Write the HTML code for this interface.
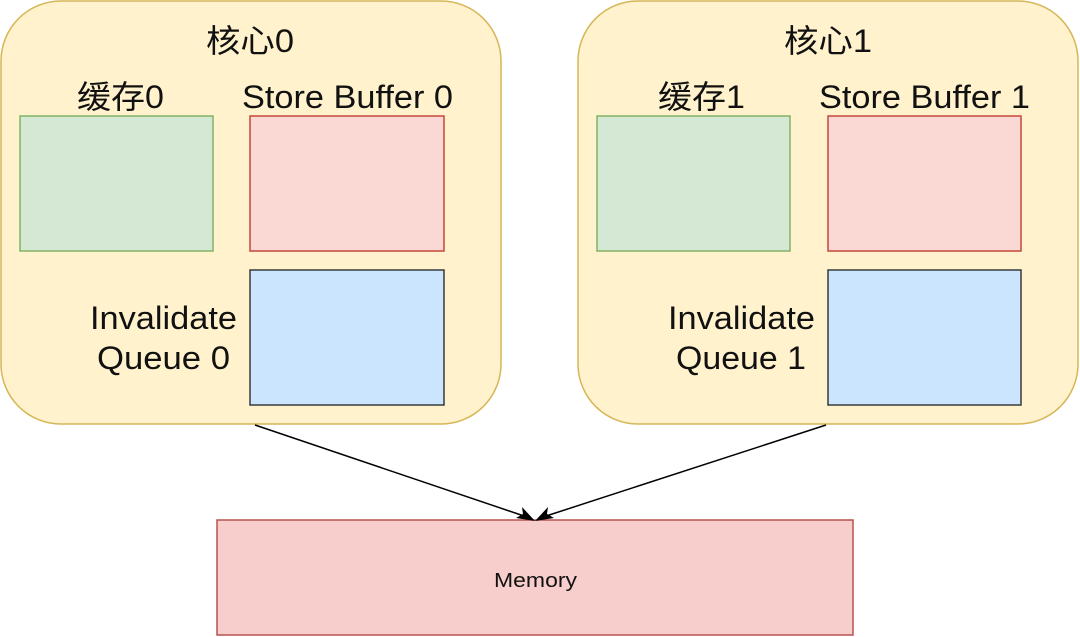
<!DOCTYPE html>
<html><head><meta charset="utf-8"><style>
html,body{margin:0;padding:0;background:#fff;}
svg{display:block}
text{font-family:"Liberation Sans","Noto Sans CJK SC",sans-serif;fill:#111;}
</style></head><body>
<svg width="1080" height="637" viewBox="0 0 1080 637" xmlns="http://www.w3.org/2000/svg">
<g stroke-width="1.5">
<rect x="1" y="1" width="500" height="423" rx="60" fill="#fff2cc" stroke="#d6b656"/>
<rect x="578" y="1" width="500" height="423" rx="60" fill="#fff2cc" stroke="#d6b656"/>
<rect x="20" y="116" width="193" height="135" fill="#d5e8d4" stroke="#82b366"/>
<rect x="250" y="116" width="194" height="135" fill="#fad9d5" stroke="#c5473d"/>
<rect x="250" y="270" width="194" height="135" fill="#cce5ff" stroke="#36393d"/>
<rect x="597" y="116" width="193" height="135" fill="#d5e8d4" stroke="#82b366"/>
<rect x="828" y="116" width="193" height="135" fill="#fad9d5" stroke="#c5473d"/>
<rect x="828" y="270" width="193" height="135" fill="#cce5ff" stroke="#36393d"/>
<rect x="217" y="520" width="636" height="115" fill="#f8cecc" stroke="#b85450"/>
</g>
<g stroke="#000" stroke-width="1.5" fill="none">
<line x1="255" y1="425" x2="527" y2="517"/>
<line x1="826" y1="425" x2="543" y2="517"/>
</g>
<polygon points="535,521 516,518 523,514 522,507" fill="#000"/>
<polygon points="535,521 554,518 547,514 548,507" fill="#000"/>
<g font-size="32" lengthAdjust="spacingAndGlyphs">
<text x="206" y="52" textLength="88" lengthAdjust="spacingAndGlyphs">核心0</text>
<text x="784" y="52" textLength="88" lengthAdjust="spacingAndGlyphs">核心1</text>
<text x="77" y="108" textLength="87" lengthAdjust="spacingAndGlyphs">缓存0</text>
<text x="242" y="108" textLength="211" lengthAdjust="spacingAndGlyphs">Store Buffer 0</text>
<text x="658" y="108" textLength="87" lengthAdjust="spacingAndGlyphs">缓存1</text>
<text x="819" y="108" textLength="211" lengthAdjust="spacingAndGlyphs">Store Buffer 1</text>
<text x="90" y="329" textLength="147" lengthAdjust="spacingAndGlyphs">Invalidate</text>
<text x="97" y="369" textLength="133" lengthAdjust="spacingAndGlyphs">Queue 0</text>
<text x="668" y="329" textLength="147" lengthAdjust="spacingAndGlyphs">Invalidate</text>
<text x="676" y="369" textLength="130" lengthAdjust="spacingAndGlyphs">Queue 1</text>
</g>
<text x="494" y="587" font-size="20" textLength="83" lengthAdjust="spacingAndGlyphs">Memory</text>
</svg>
</body></html>
